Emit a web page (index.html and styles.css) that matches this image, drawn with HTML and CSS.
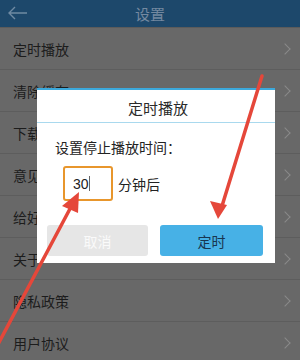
FILE: index.html
```html
<!DOCTYPE html>
<html lang="zh">
<head>
<meta charset="utf-8">
<link rel="stylesheet" href="styles.css">
</head>
<body>
<div class="screen">
  <header class="topbar">
    <svg class="back" width="22" height="16" viewBox="0 0 22 16"><path d="M21 8H3M9 2L3 8l6 6" fill="none" stroke="#6f8aa3" stroke-width="1.4"/></svg>
    <span class="title">设置</span>
  </header>
  <ul class="list">
    <li class="row"><span>定时播放</span><i class="chev"></i></li>
    <li class="row"><span>清除缓存</span><i class="chev"></i></li>
    <li class="row"><span>下载设置</span><i class="chev"></i></li>
    <li class="row"><span>意见反馈</span><i class="chev"></i></li>
    <li class="row"><span>给好评</span><i class="chev"></i></li>
    <li class="row"><span>关于</span><i class="chev"></i></li>
    <li class="row"><span>隐私政策</span><i class="chev"></i></li>
    <li class="row"><span>用户协议</span><i class="chev"></i></li>
  </ul>

  <div class="dialog">
    <div class="dlg-title">定时播放</div>
    <div class="dlg-body">
      <div class="label">设置停止播放时间：</div>
      <div class="input-line">
        <div class="input">30<span class="caret"></span></div>
        <span class="unit">分钟后</span>
      </div>
    </div>
    <div class="dlg-buttons">
      <button class="btn cancel">取消</button>
      <button class="btn ok">定时</button>
    </div>
  </div>

  <svg class="arrows" width="300" height="360" viewBox="0 0 300 360">
    <line x1="-4" y1="348" x2="72" y2="205" stroke="#e5473a" stroke-width="3.5" stroke-linecap="round"/>
    <polygon points="79,192 62,206 78,213" fill="#e5473a"/>
    <line x1="262" y1="76" x2="222" y2="206" stroke="#e5473a" stroke-width="3.5" stroke-linecap="round"/>
    <polygon points="218,219 210,201 227,205" fill="#e5473a"/>
  </svg>
</div>
</body>
</html>
```

FILE: styles.css
```css
* { box-sizing: border-box; margin: 0; padding: 0; }
html, body { width: 300px; height: 360px; overflow: hidden; }
body {
  font-family: "Noto Sans CJK SC", "Noto Sans", sans-serif;
  background: #676767;
}
.screen { position: relative; width: 300px; height: 360px; overflow: hidden; }
.topbar {
  height: 28px;
  background: #1d486b;
  display: flex;
  align-items: center;
  justify-content: center;
  position: relative;
  border-bottom: 1px solid #5b5b5b;
}
.back { position: absolute; left: 6px; top: 5px; }
.title { color: #7489a0; font-size: 15px; line-height: 1; }
.list { list-style: none; }
.row {
  height: 42px;
  display: flex;
  align-items: center;
  justify-content: space-between;
  padding: 0 8px 0 13px;
  border-bottom: 1px solid #5d5d5d;
  background: #686868;
  font-size: 14px;
  color: #1c1c1c;
}
.chev {
  width: 8px; height: 8px;
  border-top: 1px solid #8a8a8a;
  border-right: 1px solid #8a8a8a;
  transform: rotate(45deg);
  margin-right: 3px;
}
.dialog {
  position: absolute;
  left: 37px; top: 88px;
  width: 238px; height: 175px;
  background: #fff;
  border-top: 2px solid #3ca9dc;
  display: flex;
  flex-direction: column;
}
.dlg-title {
  height: 33px;
  display: flex;
  align-items: center;
  justify-content: center;
  font-size: 15px;
  color: #2a2a2a;
  border-bottom: 1px solid #a9d9ee;
  padding: 3px 0 0 4px;
}
.dlg-body { padding: 15px 0 0 18px; flex: 1; }
.label { font-size: 14px; color: #222; line-height: 18px; }
.input-line { display: flex; align-items: center; margin-top: 10px; margin-left: 8px; }
.input {
  width: 50px; height: 35px;
  border: 2px solid #e8962c;
  border-radius: 3px;
  font-family: "Liberation Sans", sans-serif;
  font-size: 14px;
  color: #222;
  display: flex; align-items: center;
  padding-left: 8px;
}
.caret { display: inline-block; width: 1px; height: 15px; background: #666; margin-left: 0; }
.unit { font-size: 14px; color: #222; margin-left: 5px; }
.dlg-buttons {
  display: flex;
  gap: 12px;
  padding: 0 10px 7px 10px;
}
.btn {
  height: 31px;
  border: none;
  border-radius: 3px;
  font-family: "Noto Sans CJK SC", sans-serif;
  font-size: 14px;
}
.cancel { width: 101px; background: #e6e6e6; color: #fafafa; }
.ok { width: 103px; background: #47b1e6; color: #183650; }
.arrows { position: absolute; left: 0; top: 0; pointer-events: none; }
```
